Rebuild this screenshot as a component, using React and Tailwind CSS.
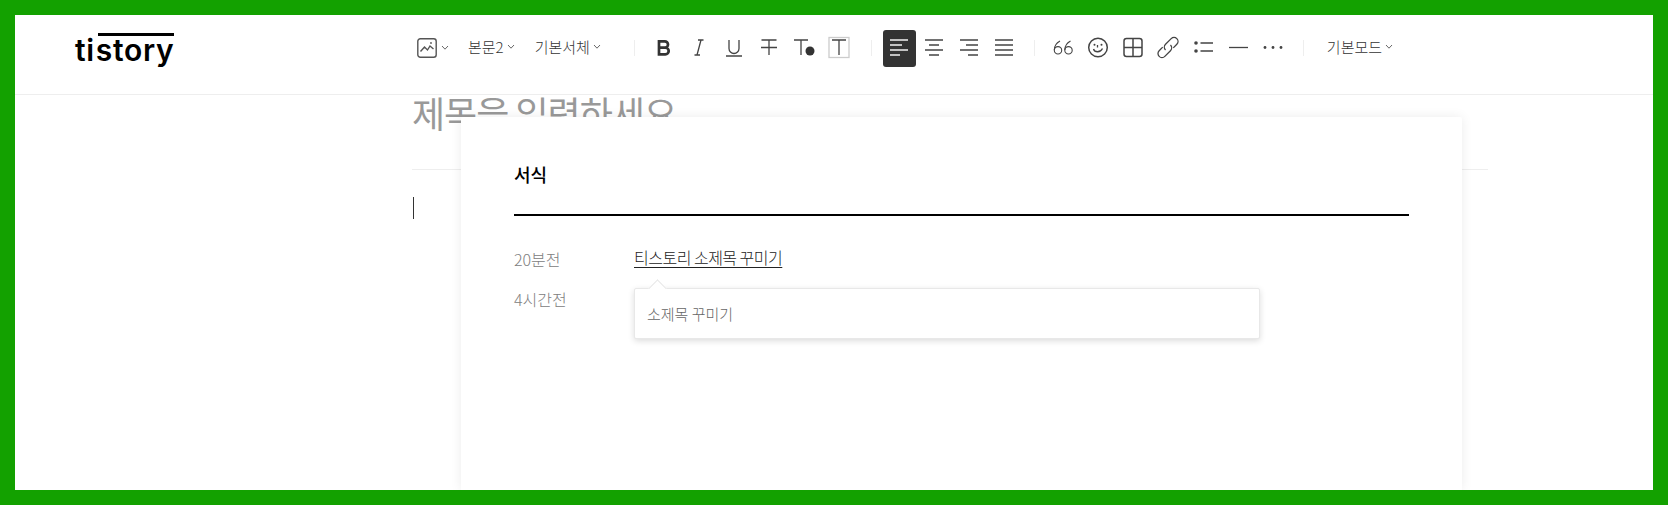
import React from "react";

const Chevron = () => (
  <svg width="8" height="6" viewBox="0 0 8 6" fill="none" stroke="#666" strokeWidth="1" className="shrink-0">
    <path d="M1 1l3 3.2L7 1" />
  </svg>
);

const Sep = ({ className }) => <div className={`w-px h-4 bg-[#eeeeee] shrink-0 ${className}`} />;

const Drop = ({ label, className }) => (
  <button className={`flex items-center gap-[3px] text-[15px] leading-5 font-light text-[#333] -mt-[2px] ${className}`}>
    {label}
    <Chevron />
  </button>
);

const Icon = ({ active, children }) => (
  <div className="w-[35px] h-[37px] flex items-center justify-center shrink-0">
    <div className={`w-[33px] h-[37px] flex items-center justify-center rounded-[3px] ${active ? "bg-[#333333]" : ""}`}>
      <svg width="24" height="24" viewBox="0 0 24 24" fill="none" stroke={active ? "#f2f2f2" : "#444"} strokeWidth="1.3">
        {children}
      </svg>
    </div>
  </div>
);

const Toolbar = () => (
  <div className="flex items-center">
    <svg width="20" height="20" viewBox="0 0 20 20" fill="none" stroke="#555" strokeWidth="1.4" className="shrink-0">
      <rect x="0.8" y="0.8" width="18.4" height="18.4" rx="2.5" />
      <path d="M3.5 13.5l4-4.5 3 3 2.5-4 3.5 3" />
      <circle cx="14" cy="5" r="0.9" fill="#555" stroke="none" />
    </svg>
    <div className="ml-[4px]"><Chevron /></div>
    <Drop label="본문2" className="ml-[19px]" />
    <Drop label="기본서체" className="ml-[20px]" />
    <Sep className="ml-[33px]" />
    <div className="ml-[12px] flex">
      <Icon><path d="M7 5.3h5.8a3.2 3.2 0 0 1 0 6.4H7zM7 11.7h6.4a3.3 3.3 0 0 1 0 6.6H7z" strokeWidth="2.7" stroke="#333" /></Icon>
      <Icon><path d="M11 4h5.5M7.5 19H13M14 4l-4 15" /></Icon>
      <Icon><path d="M7 4v8.5a5 5 0 0 0 10 0V4M4 20h16" /></Icon>
      <Icon><path d="M4.5 4h15M12 4v15M4 11.5h16" /></Icon>
      <Icon>
        <path d="M2 4h14M9 4v15" />
        <circle cx="18" cy="15" r="4.5" fill="#333" stroke="none" />
      </Icon>
      <Icon>
        <rect x="2" y="1.5" width="20" height="20" stroke="#ccc" />
        <path d="M5 4h14M12 4v15" />
      </Icon>
    </div>
    <Sep className="ml-[14px]" />
    <div className="ml-[10px] flex">
      <Icon active><path d="M3 4h18M3 9h12M3 14h18M3 19h10" /></Icon>
      <Icon><path d="M3 4h18M7 9h10M3 14h18M7 19h10" /></Icon>
      <Icon><path d="M3 4h18M9 9h12M3 14h18M11 19h10" /></Icon>
      <Icon><path d="M3 4h18M3 9h18M3 14h18M3 19h18" /></Icon>
    </div>
    <Sep className="ml-[12px]" />
    <div className="ml-[11px] flex">
      <Icon>
        <circle cx="7" cy="14.3" r="3.7" strokeWidth="1.1" />
        <path d="M3.3 14c0-4 2-7 5.7-9" strokeWidth="1.1" />
        <circle cx="17.5" cy="14.3" r="3.7" strokeWidth="1.1" />
        <path d="M13.8 14c0-4 2-7 5.7-9" strokeWidth="1.1" />
      </Icon>
      <Icon>
        <circle cx="12" cy="11.5" r="9.3" strokeWidth="1.5" />
        <path d="M7.5 13c1 3.5 7 4 9 -.5" />
        <path d="M11.5 9v2.5" />
        <circle cx="8.5" cy="8.8" r="1" fill="#444" stroke="none" />
        <circle cx="15.5" cy="8.8" r="1" fill="#444" stroke="none" />
      </Icon>
      <Icon>
        <rect x="3" y="2.5" width="18" height="18" rx="2.5" strokeWidth="1.5" />
        <path d="M12 2.5v18M3 11.5h18" strokeWidth="1.5" />
      </Icon>
      <Icon>
        <g transform="rotate(-45 12 11.5) translate(0 -0.5)">
          <path d="M8.5 8H3.5a4 4 0 0 0 0 8h8a4 4 0 0 0 4-4" />
          <path d="M15.5 16h5a4 4 0 0 0 0-8h-8a4 4 0 0 0-4 4" />
        </g>
      </Icon>
      <Icon>
        <circle cx="5" cy="7" r="1.8" fill="#444" stroke="none" />
        <circle cx="5" cy="15" r="1.8" fill="#444" stroke="none" />
        <path d="M9.5 7H22M9.5 15H22" />
      </Icon>
      <Icon><path d="M3 11.5h19" /></Icon>
      <Icon>
        <circle cx="4" cy="11.5" r="1.4" fill="#444" stroke="none" />
        <circle cx="12" cy="11.5" r="1.4" fill="#444" stroke="none" />
        <circle cx="20" cy="11.5" r="1.4" fill="#444" stroke="none" />
      </Icon>
    </div>
    <Sep className="ml-[12px]" />
    <Drop label="기본모드" className="ml-[23px]" />
  </div>
);

const Logo = () => (
  <div className="font-['Inter',sans-serif] font-semibold text-[30px] leading-none text-black tracking-[0.7px] w-[100px] shrink-0 mb-[10px]">
    ti
    <span className="relative ml-[1px]">
      story
      <span className="absolute left-[2px] right-0 top-[1px] h-[3px] bg-black" />
    </span>
  </div>
);

export default function App() {
  return (
    <div className="w-[1668px] h-[505px] border-[15px] border-[#13a100] bg-white flex flex-col overflow-hidden font-['Noto_Sans_CJK_KR','Noto_Sans',sans-serif]">
      <header className="h-[80px] shrink-0 bg-white border-b border-[#eeeeee] flex items-center pl-[60px] relative z-10">
        <Logo />
        <div className="ml-[242px] mb-[13px]">
          <Toolbar />
        </div>
      </header>

      <main className="flex-1 relative overflow-hidden">
        <div className="ml-[397px] w-[1076px]">
          <h1 className="text-[36px] leading-[50px] tracking-[-1px] font-normal text-[#999999] -mt-[8px] h-[83px] border-b border-[#eeeeee]">
            제목을 입력하세요
          </h1>
          <div className="ml-px mt-[27px] w-px h-[22px] bg-[#333]" />
        </div>

        <section className="absolute left-[446px] top-[22px] bottom-0 w-[1001px] bg-white rounded-t-[2px] shadow-[0_0_12px_rgba(0,0,0,0.08)] px-[53px]">
          <h2 className="pt-[43px] pb-[26px] text-[18px] leading-[28px] font-medium text-black border-b-2 border-black">
            서식
          </h2>
          <div className="relative mt-[29px] grid grid-cols-[120px_1fr] gap-y-[16px] text-[16px] leading-[24px] font-light text-[#808080]">
            <span className="mt-[2px]">20분전</span>
            <span className="text-[#222] tracking-[-0.5px]">
              <a className="underline underline-offset-[3px]">티스토리 소제목 꾸미기</a>
            </span>
            <span>4시간전</span>
            <span />
            <div className="absolute left-[120px] top-[43px] w-[626px] h-[51px] bg-white rounded-[2px] border border-[#e8e8e8] shadow-[0_2px_6px_rgba(0,0,0,0.14)] flex items-center pl-[12px] text-[15px] text-[#666]">
              <span className="absolute left-[16px] -top-[7px] w-[13px] h-[13px] rotate-45 bg-white border-l border-t border-[#e8e8e8]" />
              소제목 꾸미기
            </div>
          </div>
        </section>
      </main>
    </div>
  );
}
